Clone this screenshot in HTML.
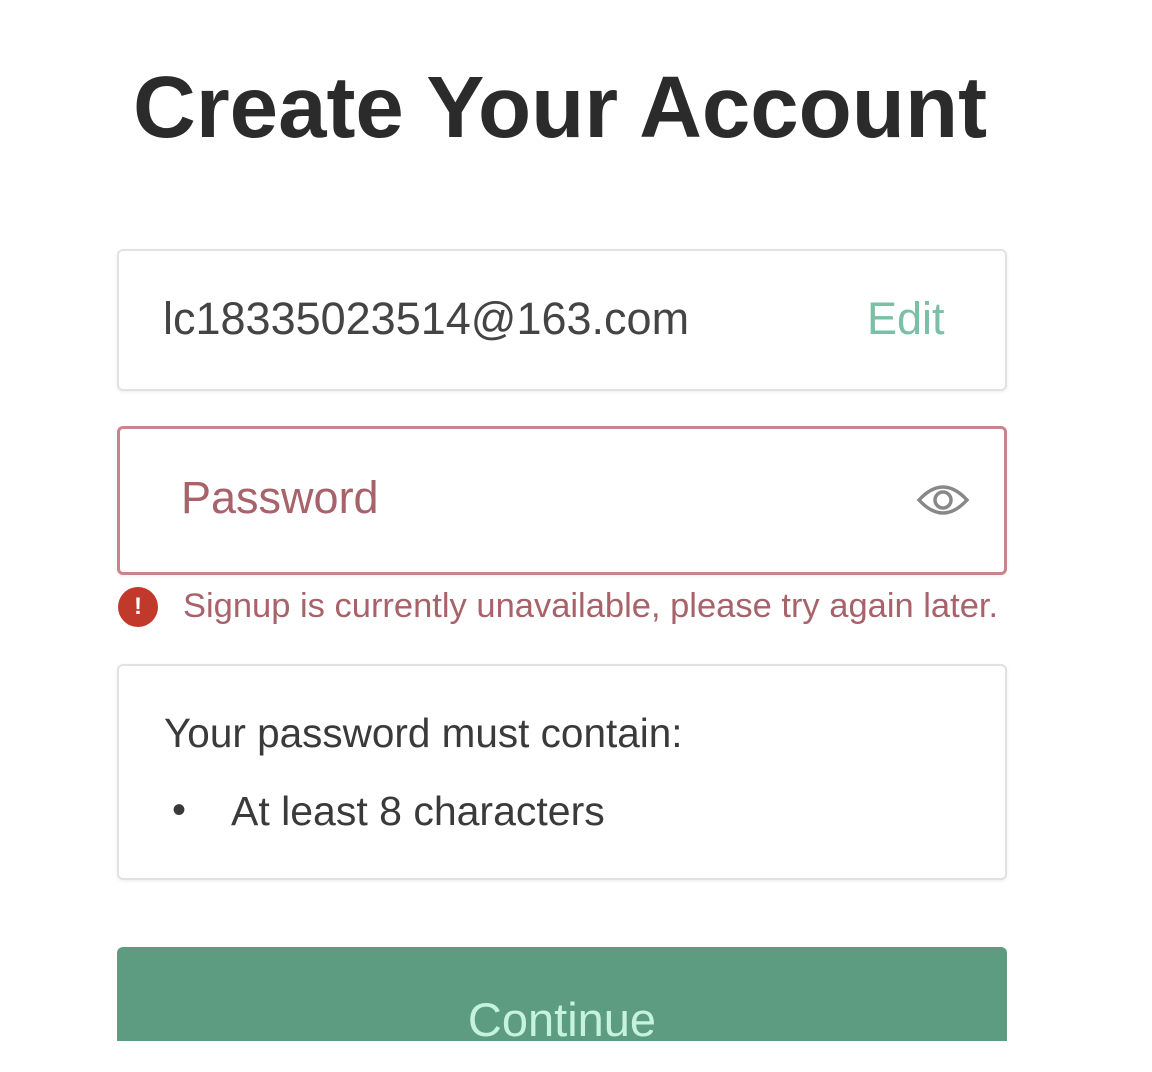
<!DOCTYPE html>
<html><head><style>
body{margin:0;width:1152px;height:1072px;background:#fff;font-family:"Liberation Sans",sans-serif;position:relative;overflow:hidden}
.a{position:absolute;white-space:nowrap}
h1{position:absolute;left:133px;top:58px;margin:0;font-size:87px;font-weight:bold;color:#2b2b2b;white-space:nowrap}
.box{position:absolute;left:117px;width:890px;border:2px solid #e2e2e2;border-radius:6px;box-sizing:border-box;box-shadow:0 1px 3px rgba(0,0,0,.08)}
</style></head><body>
<h1>Create Your Account</h1>
<div class="box" style="top:249px;height:142px"></div>
<div class="a" style="left:163px;top:293px;font-size:45px;color:#444">lc18335023514@163.com</div>
<div class="a" style="left:867px;top:293px;font-size:45px;color:#7bbfa5">Edit</div>
<div class="box" style="top:426px;height:149px;border:3px solid #c9858d"></div>
<div class="a" style="left:181px;top:472px;font-size:45px;color:#a8626a">Password</div>
<svg class="a" style="left:915px;top:478px" width="56" height="44" viewBox="0 0 56 44"><path d="M4 22 Q28 -4 52 22 Q28 48 4 22Z" fill="none" stroke="#888" stroke-width="3.5"/><circle cx="28" cy="22" r="8" fill="none" stroke="#888" stroke-width="3.5"/></svg>
<div class="a" style="left:118px;top:587px;width:40px;height:40px;border-radius:50%;background:#c0392b;color:#fff;font-size:24px;font-weight:bold;text-align:center;line-height:40px">!</div>
<div class="a" style="left:183px;top:587px;font-size:34.5px;color:#a8626a">Signup is currently unavailable, please try again later.</div>
<div class="box" style="top:664px;height:216px"></div>
<div class="a" style="left:164px;top:710px;font-size:40.5px;color:#3a3a3a">Your password must contain:</div>
<div class="a" style="left:172px;top:788px;font-size:40px;color:#3a3a3a">•</div>
<div class="a" style="left:231px;top:788px;font-size:41px;color:#3a3a3a">At least 8 characters</div>
<div class="a" style="left:117px;top:947px;width:890px;height:94px;background:#5d9c80;border-radius:6px 6px 0 0"></div>
<div class="a" style="left:117px;top:992px;width:890px;text-align:center;font-size:47px;color:#c6f3e0">Continue</div>
</body></html>
